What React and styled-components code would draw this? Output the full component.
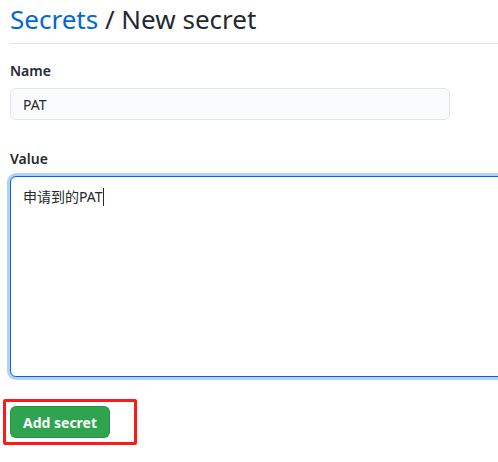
import React from 'react';
import styled, { createGlobalStyle } from 'styled-components';

const GlobalStyle = createGlobalStyle`
  html, body {
    margin: 0;
    padding: 0;
    background: #ffffff;
    overflow: hidden;
  }
  body {
    font-family: "Noto Sans", "Noto Sans CJK SC", sans-serif;
    color: #24292e;
  }
`;

const Page = styled.div`
  box-sizing: border-box;
  width: 100%;
  padding: 0 0 0 10px;
  overflow: hidden;
`;

const Header = styled.div`
  padding: 3px 0 7px;
  border-bottom: 1px solid #e1e4e8;
  margin-bottom: 16px;
`;

const Title = styled.h2`
  margin: 0;
  font-size: 26px;
  font-weight: 400;
  line-height: 33px;
  color: #24292e;
`;

const Crumb = styled.a`
  color: #0366d6;
  text-decoration: none;
`;

const Field = styled.div`
  margin-bottom: ${p => p.gap}px;
`;

const Label = styled.label`
  display: block;
  font-size: 14px;
  font-weight: 600;
  line-height: 20px;
  padding-top: 1px;
  margin-bottom: 7px;
`;

const Input = styled.div`
  box-sizing: border-box;
  width: 440px;
  height: 32px;
  padding: 0 12px;
  display: flex;
  align-items: center;
  font-size: 14px;
  background: #fafbfc;
  border: 1px solid #e1e4e8;
  border-radius: 6px;
`;

const TextArea = styled.div`
  box-sizing: border-box;
  width: 600px;
  height: 201px;
  padding: 10px 12px;
  font-size: 14px;
  line-height: 20px;
  background: #ffffff;
  border: 1px solid #0366d6;
  border-radius: 6px;
  box-shadow: 0 0 0 3px rgba(3, 102, 214, 0.3);
`;

const Caret = styled.span`
  display: inline-block;
  width: 1px;
  height: 18px;
  background: #24292e;
  vertical-align: -4px;
`;

const Highlight = styled.div`
  box-sizing: border-box;
  width: 134px;
  margin-left: -7px;
  padding: 4px;
  border: 3px solid #ff1a1a;
  border-radius: 2px;
`;

const Button = styled.button`
  display: block;
  width: 100px;
  height: 32px;
  padding: 0;
  font-family: inherit;
  font-size: 14px;
  font-weight: 700;
  color: #ffffff;
  background: #2ea44f;
  border: 1px solid rgba(27, 31, 35, 0.15);
  border-radius: 6px;
  cursor: pointer;
`;

export default function App() {
  return (
    <Page>
      <GlobalStyle />
      <Header>
        <Title>
          <Crumb href="#">Secrets</Crumb> / New secret
        </Title>
      </Header>
      <Field gap={28}>
        <Label>Name</Label>
        <Input>PAT</Input>
      </Field>
      <Field gap={22}>
        <Label>Value</Label>
        <TextArea>
          申请到的PAT<Caret />
        </TextArea>
      </Field>
      <Highlight>
        <Button type="submit">Add secret</Button>
      </Highlight>
    </Page>
  );
}
